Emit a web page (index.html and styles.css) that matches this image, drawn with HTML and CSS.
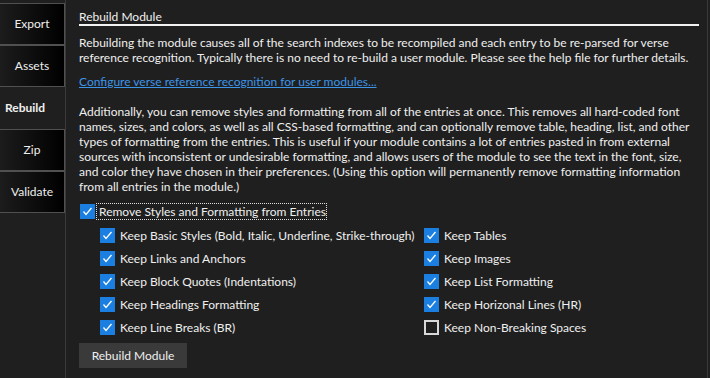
FILE: index.html
```html
<!DOCTYPE html>
<html lang="en">
<head>
    <meta charset="UTF-8">
    <title>Rebuild Module</title>
    <link rel="stylesheet" href="styles.css">
</head>
<body>
    <div class="window">
        <div class="sidebar">
            <div class="tab">Export</div>
            <div class="tab">Assets</div>
            <div class="tab active">Rebuild</div>
            <div class="tab">Zip</div>
            <div class="tab">Validate</div>
        </div>

        <div class="panel">
            <h1 class="heading">Rebuild Module</h1>

            <p class="text">Rebuilding the module causes all of the search indexes to be recompiled and each entry to be re-parsed for verse reference recognition. Typically there is no need to re-build a user module. Please see the help file for further details.</p>

            <p class="link-row"><a href="#" class="link">Configure verse reference recognition for user modules...</a></p>

            <p class="text more">Additionally, you can remove styles and formatting from all of the entries at once. This removes all hard-coded font names, sizes, and colors, as well as all CSS-based formatting, and can optionally remove table, heading, list, and other types of formatting from the entries. This is useful if your module contains a lot of entries pasted in from external sources with inconsistent or undesirable formatting, and allows users of the module to see the text in the font, size, and color they have chosen in their preferences. (Using this option will permanently remove formatting information from all entries in the module.)</p>

            <label class="check main-check">
                <span class="box checked"><svg viewBox="0 0 15 15"><polyline points="3.5,7.5 6,10.5 11.5,4"/></svg></span>
                <span class="focus">Remove Styles and Formatting from Entries</span>
            </label>

            <div class="options">
                <label class="check"><span class="box checked"><svg viewBox="0 0 15 15"><polyline points="3.5,7.5 6,10.5 11.5,4"/></svg></span>Keep Basic Styles (Bold, Italic, Underline, Strike-through)</label>
                <label class="check"><span class="box checked"><svg viewBox="0 0 15 15"><polyline points="3.5,7.5 6,10.5 11.5,4"/></svg></span>Keep Tables</label>
                <label class="check"><span class="box checked"><svg viewBox="0 0 15 15"><polyline points="3.5,7.5 6,10.5 11.5,4"/></svg></span>Keep Links and Anchors</label>
                <label class="check"><span class="box checked"><svg viewBox="0 0 15 15"><polyline points="3.5,7.5 6,10.5 11.5,4"/></svg></span>Keep Images</label>
                <label class="check"><span class="box checked"><svg viewBox="0 0 15 15"><polyline points="3.5,7.5 6,10.5 11.5,4"/></svg></span>Keep Block Quotes (Indentations)</label>
                <label class="check"><span class="box checked"><svg viewBox="0 0 15 15"><polyline points="3.5,7.5 6,10.5 11.5,4"/></svg></span>Keep List Formatting</label>
                <label class="check"><span class="box checked"><svg viewBox="0 0 15 15"><polyline points="3.5,7.5 6,10.5 11.5,4"/></svg></span>Keep Headings Formatting</label>
                <label class="check"><span class="box checked"><svg viewBox="0 0 15 15"><polyline points="3.5,7.5 6,10.5 11.5,4"/></svg></span>Keep Horizonal Lines (HR)</label>
                <label class="check"><span class="box checked"><svg viewBox="0 0 15 15"><polyline points="3.5,7.5 6,10.5 11.5,4"/></svg></span>Keep Line Breaks (BR)</label>
                <label class="check"><span class="box"></span>Keep Non-Breaking Spaces</label>
            </div>

            <button type="button" class="button">Rebuild Module</button>
        </div>
    </div>
</body>
</html>
```

FILE: styles.css
```css
html, body {
    margin: 0;
    padding: 0;
    background-color: #1f1f1f;
}
body {
    font-family: Lato, "Liberation Sans", sans-serif;
    font-size: 12px;
    line-height: 15px;
    color: #efefef;
}
.window {
    display: flex;
    width: 710px;
    height: 378px;
    overflow: hidden;
}
.sidebar {
    width: 65px;
    flex: none;
    border-right: 1px solid #3a3a3a;
    padding-top: 3px;
}
.tab {
    height: 40px;
    line-height: 40px;
    text-align: center;
    border-top: 1px solid #505050;
    border-bottom: 1px solid #505050;
    border-right: 1px solid #505050;
    background: linear-gradient(to right, #1c1c1c, #000);
}
.tab.active {
    background: #1f1f1f;
    border-color: transparent;
    font-weight: bold;
    text-align: left;
    padding-left: 5px;
}
.panel {
    flex: 1;
    padding: 9px 8px 0 13px;
    border-right: 1px solid #3a3a3a;
    margin-right: 2px;
}
.heading {
    font-size: 12px;
    font-weight: normal;
    margin: 0;
    padding-bottom: 0;
    border-bottom: 2px solid #f2f2f2;
}
.text {
    margin: 9px 0 0;
}
.text.more {
    margin-top: 15px;
}
.link-row {
    margin: 9px 0 0;
}
.link {
    color: #3d95e8;
    text-decoration: underline;
}
.check {
    display: flex;
    align-items: center;
    height: 23px;
    white-space: nowrap;
}
.box {
    width: 15px;
    height: 15px;
    flex: none;
    box-sizing: border-box;
    border: 2px solid #d8d8d8;
    margin-right: 5px;
}
.box.checked {
    background: #1a7fe1;
    border: none;
}
.box svg {
    display: block;
    width: 15px;
    height: 15px;
    fill: none;
    stroke: #fff;
    stroke-width: 1.3;
}
.main-check {
    margin-top: 6px;
    padding-left: 1px;
}
.main-check .box {
    margin-right: 2px;
}
.focus {
    outline: 1px dotted #e0e0e0;
    padding: 0 0 0 2px;
}
.options {
    display: grid;
    grid-template-columns: 324px auto;
    padding-left: 21px;
    margin-top: 1px;
}
.button {
    margin-top: 4px;
    width: 108px;
    height: 25px;
    background: #3a3a3a;
    color: #efefef;
    border: none;
    font-family: inherit;
    font-size: 12px;
    padding: 0;
}
```
